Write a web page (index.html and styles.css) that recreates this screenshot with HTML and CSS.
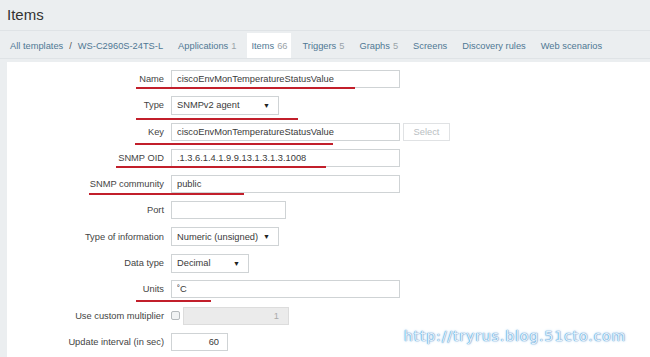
FILE: index.html
```html
<!DOCTYPE html>
<html>
<head>
  <title>Items</title>
  <link rel="stylesheet" href="styles.css">
</head>
<body>
  <div class="header">
    <h1>Items</h1>
  </div>

  <div class="tabs">
    <a href="#" class="tab first">All templates</a>
    <span class="sep">/</span>
    <a href="#" class="tab host">WS-C2960S-24TS-L</a>
    <a href="#" class="tab">Applications <span class="count">1</span></a>
    <a href="#" class="tab active">Items <span class="count">66</span></a>
    <a href="#" class="tab">Triggers <span class="count">5</span></a>
    <a href="#" class="tab">Graphs <span class="count">5</span></a>
    <a href="#" class="tab">Screens</a>
    <a href="#" class="tab">Discovery rules</a>
    <a href="#" class="tab">Web scenarios</a>
  </div>

  <div class="form">
    <div class="row">
      <label>Name</label>
      <input type="text" class="field long" value="ciscoEnvMonTemperatureStatusValue">
      <div class="mark mark-name"></div>
    </div>
    <div class="row">
      <label>Type</label>
      <div class="select sel-type">SNMPv2 agent <span class="arrow">&#9660;</span></div>
      <div class="mark mark-type"></div>
    </div>
    <div class="row">
      <label>Key</label>
      <input type="text" class="field long" value="ciscoEnvMonTemperatureStatusValue">
      <button class="btn">Select</button>
      <div class="mark mark-key"></div>
    </div>
    <div class="row">
      <label>SNMP OID</label>
      <input type="text" class="field long" value=".1.3.6.1.4.1.9.9.13.1.3.1.3.1008">
      <div class="mark mark-oid"></div>
    </div>
    <div class="row">
      <label>SNMP community</label>
      <input type="text" class="field long" value="public">
      <div class="mark mark-community"></div>
    </div>
    <div class="row">
      <label>Port</label>
      <input type="text" class="field port" value="">
    </div>
    <div class="row">
      <label>Type of information</label>
      <div class="select sel-type">Numeric (unsigned) <span class="arrow">&#9660;</span></div>
    </div>
    <div class="row">
      <label>Data type</label>
      <div class="select sel-data">Decimal <span class="arrow">&#9660;</span></div>
    </div>
    <div class="row">
      <label>Units</label>
      <input type="text" class="field long" value="&#730;C">
      <div class="mark mark-units"></div>
    </div>
    <div class="row">
      <label>Use custom multiplier</label>
      <span class="check"></span>
      <input type="text" class="field multiplier" value="1" disabled>
    </div>
    <div class="row">
      <label>Update interval (in sec)</label>
      <input type="text" class="field interval" value="60">
    </div>
  </div>

  <div class="watermark">http://tryrus.blog.51cto.com</div>
</body>
</html>
```

FILE: styles.css
```css
body {
  margin: 0;
  padding: 0;
  background: #ebeef0;
  font-family: "Liberation Sans", Arial, sans-serif;
  font-size: 9.3px;
  color: #444;
  overflow: hidden;
  position: relative;
  height: 357px;
}

.header {
  height: 30px;
  padding-left: 7px;
}

.header h1 {
  margin: 0;
  padding-top: 6px;
  font-size: 15px;
  font-weight: normal;
  color: #333;
}

.tabs {
  display: flex;
  align-items: stretch;
  height: 25px;
  padding-left: 6px;
  padding-top: 2px;
  border-top: 1px solid #dfe3e6;
  border-bottom: 1px solid #dfe3e6;
}

.tab {
  display: flex;
  align-items: center;
  padding: 0 4px;
  margin-right: 7px;
  color: #4f7894;
  text-decoration: none;
}

.tab.first {
  margin-right: 0;
}

.sep {
  display: flex;
  align-items: center;
  padding: 0 2px;
  color: #555;
}

.tab.host {
  margin-right: 7px;
}

.tab.active {
  background: #fff;
}

.count {
  color: #9aa3a8;
  margin-left: 3px;
}

.form {
  background: #fff;
  margin: 3px 0 0 7px;
  padding-top: 8px;
  height: 300px;
}

.row {
  position: relative;
  display: flex;
  align-items: center;
  height: 18px;
  margin-bottom: 8.3px;
}

.row label {
  width: 164px;
  padding-right: 7px;
  text-align: right;
  box-sizing: border-box;
}

.field {
  height: 18px;
  box-sizing: border-box;
  border: 1px solid #cfd3d5;
  padding: 0 5px;
  font-family: "Liberation Sans", Arial, sans-serif;
  font-size: 9.3px;
  color: #3a3a3a;
  background: #fff;
  margin: 0;
}

.field.long {
  width: 229px;
}

.field.port {
  width: 115px;
}

.field.multiplier {
  width: 106px;
  margin-left: 3px;
  background: #ebebeb;
  border-color: #dcdcdc;
  color: #aaa;
  text-align: right;
  padding-right: 9px;
}

.field.interval {
  width: 57px;
  text-align: right;
  padding-right: 8px;
}

.select {
  display: flex;
  align-items: center;
  justify-content: space-between;
  height: 19px;
  box-sizing: border-box;
  border: 1px solid #cfd3d5;
  padding: 0 5px;
  color: #3a3a3a;
  background: #fff;
}

.sel-type {
  width: 108px;
}

.sel-data {
  width: 78px;
}

.arrow {
  font-size: 7px;
  color: #222;
  margin-right: 3px;
}

.btn {
  height: 18px;
  width: 47px;
  margin-left: 3px;
  border: 1px solid #e0e2e4;
  background: #fff;
  color: #b9bec2;
  font-family: "Liberation Sans", Arial, sans-serif;
  font-size: 9.3px;
  padding: 0;
}

.check {
  width: 9px;
  height: 9px;
  box-sizing: border-box;
  border: 1px solid #b5babd;
  border-radius: 2px;
  background: #f1f3f4;
}

.mark {
  position: absolute;
  height: 2px;
  background: #c21f2b;
}

.mark-name {
  left: 129px;
  width: 219px;
  top: 17px;
}

.mark-type {
  left: 129px;
  width: 162px;
  top: 22px;
}

.mark-key {
  left: 128px;
  width: 198px;
  top: 20px;
}

.mark-oid {
  left: 109px;
  width: 210px;
  top: 17px;
}

.mark-community {
  left: 82px;
  width: 155px;
  top: 18px;
}

.mark-units {
  left: 129px;
  width: 75px;
  top: 20px;
}

.watermark {
  position: absolute;
  left: 404px;
  top: 328px;
  font-family: "DejaVu Sans", sans-serif;
  font-size: 14px;
  letter-spacing: 0.9px;
  color: #e4f1fb;
  text-shadow: 0 0 1px #4f94cf, 0 0 1px #4f94cf, 0 0 3px #9fc8ea;
}
```
